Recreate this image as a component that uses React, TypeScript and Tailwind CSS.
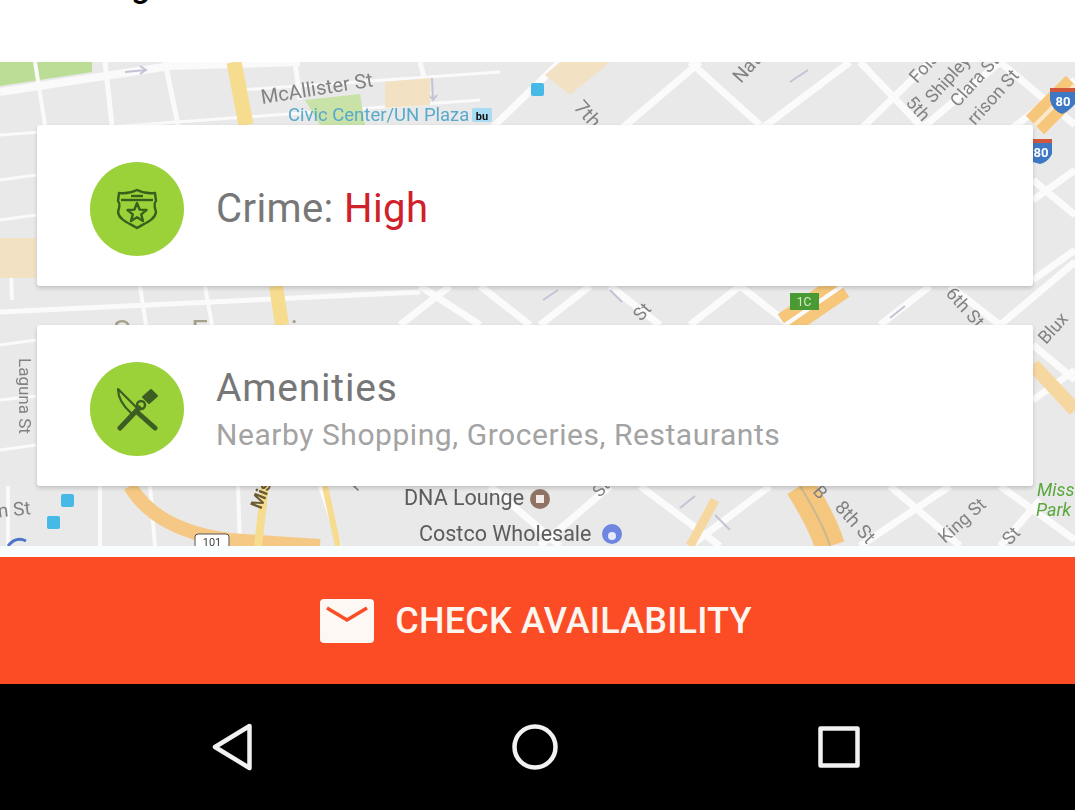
import React from 'react'

const sans = "[font-family:Roboto,'Noto_Sans',sans-serif]"

// Map drawing that sits behind the two cards
const MapBackground = () => (
  <svg className="absolute inset-0 w-full h-full blur-[0.7px]" viewBox="0 62 1075 484" preserveAspectRatio="none">
    <rect x="0" y="62" width="1075" height="484" fill="#e9e9e9" />

    {/* green park, top left */}
    <polygon points="0,62 92,62 92,72 0,86" fill="#bcdd96" />

    {/* straight west side streets */}
    <g stroke="#fafafa" fill="none">
      <path d="M0 92 L170 66 L300 62" strokeWidth="8" />
      <path d="M0 135 L480 100 M240 90 L500 72" strokeWidth="3" />
      <path d="M0 180 L36 175 M0 220 L36 215 M0 255 L36 250 M0 345 L36 340" strokeWidth="3" />
      <path d="M0 312 L420 292" strokeWidth="5" />
      <path d="M105 62 L112 125 M165 62 L178 125 M295 62 L300 100 M420 62 L430 100" strokeWidth="5" />
      <path d="M35 62 L45 125 M10 240 L12 300 M140 286 L146 325 M205 286 L212 325" strokeWidth="4" />
      <path d="M8 486 L8 546 M100 486 L100 546 M150 486 L155 546 M238 486 L240 546 M320 486 L340 546" strokeWidth="4" />
      <path d="M0 400 L36 396 M0 450 L36 445" strokeWidth="3" />
    </g>

    {/* diagonal SoMa grid */}
    <g stroke="#fbfbfb" fill="none" strokeWidth="7">
      <path d="M490 130 L560 62 M620 130 L700 62 M760 130 L850 62 M860 130 L930 62 M920 130 L1000 62 M1010 130 L1075 80" />
      <path d="M690 62 L760 125 M860 62 L920 125 M1000 62 L1075 125" />
      <path d="M400 325 L450 286 M540 325 L590 286 M690 325 L740 286 M880 325 L930 286 M1033 200 L1075 170 M1033 280 L1075 250 M1000 325 L1075 262" />
      <path d="M420 286 L480 325 M480 286 L530 325 M610 286 L660 325 M740 286 L790 325 M950 286 L1000 325 M1033 180 L1075 215 M1033 345 L1075 380" />
      <path d="M540 546 L610 486 M690 546 L770 486 M860 546 L950 486 M1000 546 L1040 500" />
      <path d="M490 486 L560 546 M640 486 L720 546 M890 486 L960 546 M1000 486 L1075 540" />
      <path d="M1033 400 L1075 370" />
    </g>

    {/* one-way arrows */}
    <g stroke="#c3c3d6" fill="none" strokeWidth="2">
      <path d="M125 72 L146 70 M140 66 L146 70 L140 74" />
      <path d="M432 78 L433 100 M429 95 L433 100 L437 95" />
      <path d="M790 82 L808 70" />
      <path d="M543 300 L558 290" />
      <path d="M610 290 L622 302" />
      <path d="M890 318 L905 306" />
      <path d="M680 508 L695 496" />
      <path d="M715 515 L730 530" />
    </g>

    {/* beige blocks */}
    <g fill="#f3e1c4">
      <polygon points="560,62 610,62 570,95 545,75" />
      <polygon points="0,238 36,238 36,278 0,278" />
      <polygon points="385,82 430,78 430,105 385,108" />
    </g>
    <polygon points="305,100 360,94 365,125 320,125" fill="#c8e2a8" />

    {/* highways */}
    <g fill="none">
      <path d="M234 62 L246 125" stroke="#f6dc8e" strokeWidth="15" />
      <path d="M276 286 L282 325" stroke="#f6dc8e" strokeWidth="14" />
      <path d="M130 486 C150 520 190 535 230 540 L320 546" stroke="#f5c985" strokeWidth="14" />
      <path d="M785 325 L842 286" stroke="#f6c77a" strokeWidth="26" />
      <path d="M785 325 L842 286" stroke="#fbfbfb" strokeWidth="4" />
      <path d="M1035 125 L1075 85" stroke="#f6c77a" strokeWidth="26" />
      <path d="M1035 125 L1075 85" stroke="#fbe8c8" strokeWidth="4" />
      <path d="M1033 365 L1075 410" stroke="#f6d7a0" strokeWidth="14" />
      <path d="M800 486 C815 510 825 530 830 546" stroke="#f5c77e" strokeWidth="30" />
      <path d="M800 486 C815 510 825 530 830 546" stroke="#c9b98f" strokeWidth="2" />
      <path d="M265 486 L258 546" stroke="#f6dc8e" strokeWidth="8" />
      <path d="M325 486 L338 546" stroke="#f6dc8e" strokeWidth="6" />
      <path d="M690 546 L715 500" stroke="#f6d7a0" strokeWidth="9" />
    </g>

    {/* freeway and exit shields */}
    <rect x="790" y="293" width="29" height="17" fill="#4a9a34" />
    <text x="804" y="306" textAnchor="middle" fontSize="12" fill="#d7ebc8" fontFamily="Roboto, sans-serif">1C</text>
    <path d="M1050 91 H1075 V104 Q1068 112 1062 114 Q1052 110 1050 100 Z" fill="#3d78c4" />
    <rect x="1050" y="88" width="25" height="4" fill="#d0563c" />
    <text x="1063" y="106" textAnchor="middle" fontSize="13" fontWeight="700" fill="#ffffff" fontFamily="Roboto, sans-serif">80</text>
    <path d="M1033 143 H1052 V154 Q1048 162 1040 164 L1033 162 Z" fill="#3d78c4" />
    <rect x="1033" y="139" width="19" height="4" fill="#d0563c" />
    <text x="1041" y="157" textAnchor="middle" fontSize="13" fontWeight="700" fill="#ffffff" fontFamily="Roboto, sans-serif">80</text>
    <rect x="195" y="534" width="34" height="14" rx="3" fill="#ffffff" stroke="#555555" />
    <text x="212" y="546" textAnchor="middle" fontSize="11" fill="#444444" fontFamily="Roboto, sans-serif">101</text>

    {/* transit markers */}
    <rect x="531" y="83" width="13" height="13" rx="2" fill="#47b9e6" />
    <rect x="61" y="494" width="13" height="13" rx="2" fill="#47b9e6" />
    <rect x="47" y="516" width="13" height="13" rx="2" fill="#47b9e6" />
    <path d="M8 546 Q16 536 26 541" fill="none" stroke="#4c74c8" strokeWidth="3" />
    <rect x="472" y="108" width="20" height="14" rx="2" fill="#a9dcf2" />
    <text x="482" y="120" textAnchor="middle" fontSize="11" fontWeight="700" fill="#111111" fontFamily="Roboto, sans-serif">bu</text>

    {/* POI dots */}
    <circle cx="540" cy="499" r="10" fill="#8f7464" />
    <rect x="536" y="495" width="8" height="8" fill="#f3ece6" />
    <circle cx="612" cy="534" r="10" fill="#6f86e0" />
    <circle cx="612" cy="536" r="4" fill="#e6ebfb" />

    {/* street labels */}
    <g fontFamily="Roboto, sans-serif" fill="#828282" fontSize="20">
      <text x="262" y="104" transform="rotate(-9 262 104)">McAllister St</text>
      <text x="573" y="108" transform="rotate(48 573 108)">7th</text>
      <text x="741" y="84" fontSize="19" transform="rotate(-48 741 84)">Natc</text>
      <text x="917" y="84" fontSize="18" transform="rotate(-48 917 84)">Fols</text>
      <text x="933" y="104" fontSize="18" transform="rotate(-48 933 104)">Shipley</text>
      <text x="958" y="108" fontSize="18" transform="rotate(-48 958 108)">Clara St</text>
      <text x="975" y="126" fontSize="18" transform="rotate(-48 975 126)">rrison St</text>
      <text x="905" y="103" fontSize="18" transform="rotate(48 905 103)">5th</text>
      <text x="641" y="322" fontSize="18" transform="rotate(-48 641 322)">St</text>
      <text x="945" y="294" fontSize="18" transform="rotate(48 945 294)">6th St</text>
      <text x="1046" y="345" fontSize="18" transform="rotate(-48 1046 345)">Blux</text>
      <text x="29" y="358" fontSize="17" transform="rotate(90 29 358) translate(0 10)">Laguna St</text>
      <text x="-6" y="518" fontSize="19" transform="rotate(-6 -6 518)">in St</text>
      <text x="261" y="510" fontSize="17" fontWeight="700" fill="#6b5a34" transform="rotate(-68 261 510)">Mis</text>
      <text x="600" y="498" fontSize="17" transform="rotate(-48 600 498)">St</text>
      <text x="357" y="492" fontSize="17" transform="rotate(-48 357 492)">K</text>
      <text x="812" y="492" fontSize="18" transform="rotate(48 812 492)">B</text>
      <text x="834" y="508" fontSize="19" transform="rotate(48 834 508)">8th St</text>
      <text x="945" y="544" fontSize="18" transform="rotate(-42 945 544)">King St</text>
      <text x="1010" y="546" fontSize="18" transform="rotate(-48 1010 546)">St</text>
      <text x="404" y="505" fontSize="21.5" fill="#5c5c5c">DNA Lounge</text>
      <text x="419" y="541" fontSize="21.5" fill="#5c5c5c">Costco Wholesale</text>
      <text x="1037" y="496" fontSize="18" fontStyle="italic" fill="#5aa83c">Miss</text>
      <text x="1036" y="516" fontSize="18" fontStyle="italic" fill="#5aa83c">Park</text>
      <text x="288" y="121" fontSize="18.5" fill="#58aacb">Civic Center/UN Plaza</text>
      <text x="113" y="341" fontSize="30" letterSpacing="5" fill="#a69f8c">San Francisco</text>
    </g>
  </svg>
)

const BadgeIcon = () => (
  <svg viewBox="0 0 44 44" className="w-[44px] h-[44px]" fill="none" stroke="#38601c" strokeWidth="2.4" strokeLinejoin="round">
    <path d="M4 6 C12 7 16 6 22 3 C28 6 32 7 40 6 L41 14 C38 17 40 21 41 25 C40 33 30 36 22 41 C14 36 4 33 3 25 C4 21 6 17 3 14 Z" />
    <path d="M6 13 H38" />
    <path d="M16 9 H28" />
    <path d="M22 16 L24.6 22.6 L31.5 23 L26.2 27.4 L28 34 L22 30.3 L16 34 L17.8 27.4 L12.5 23 L19.4 22.6 Z" />
  </svg>
)

const UtensilsIcon = () => (
  <svg viewBox="0 0 44 44" className="w-[44px] h-[44px]" fill="none" stroke="#3c5e22" strokeLinecap="round" strokeLinejoin="round">
    <path d="M3 2 L24 23 L17 27 C9 20 3 12 3 2 Z" strokeWidth="2.2" />
    <path d="M22 25 L40 41" strokeWidth="5" />
    <path d="M5 41 L24 21" strokeWidth="5" />
    <circle cx="26" cy="18" r="4" strokeWidth="2.5" />
    <path d="M28 10 L36 3 L42 9 L34 16 Z" fill="#3c5e22" strokeWidth="2" />
  </svg>
)

const IconCircle = ({ children }: { children: React.ReactNode }) => (
  <div className="w-[94px] h-[94px] rounded-full bg-[#9bd139] flex items-center justify-center shrink-0">
    {children}
  </div>
)

export default function App() {
  return (
    <div className={`w-[1075px] h-[810px] overflow-hidden bg-white flex flex-col ${sans}`}>
      {/* Heading cut off by the top of the screen */}
      <div className="h-[62px] shrink-0 relative overflow-hidden">
        <p className="absolute left-[80px] -top-[33px] text-[34px] leading-[36px] font-medium text-black whitespace-nowrap">
          Neighborhood Details
        </p>
      </div>

      {/* Map with cards */}
      <div className="relative h-[484px] shrink-0 overflow-hidden pl-[37px] pr-[42px] pt-[63px] flex flex-col gap-[39px]">
        <MapBackground />
        <div className="relative h-[161px] bg-white rounded-[3px] shadow-[0_2px_4px_rgba(0,0,0,0.18)] flex items-center gap-[32px] pl-[53px] pt-[7px]">
          <IconCircle>
            <BadgeIcon />
          </IconCircle>
          <p className="text-[40px] leading-none tracking-[0.4px] text-[#777777]">
            Crime: <span className="text-[#d0202a]">High</span>
          </p>
        </div>
        <div className="relative h-[161px] bg-white rounded-[3px] shadow-[0_2px_4px_rgba(0,0,0,0.18)] flex items-center gap-[32px] pl-[53px] pt-[7px]">
          <IconCircle>
            <UtensilsIcon />
          </IconCircle>
          <div className="flex flex-col gap-[11px]">
            <p className="text-[39px] leading-[40px] tracking-[0.8px] text-[#777777]">Amenities</p>
            <p className="text-[30px] leading-[32px] tracking-[0.55px] text-[#a3a3a3]">Nearby Shopping, Groceries, Restaurants</p>
          </div>
        </div>
      </div>

      <div className="h-[11px] shrink-0 bg-[#f8fdfd]" />

      {/* Call to action */}
      <div className="h-[127px] shrink-0 bg-[#fb4c25] flex items-center justify-center gap-[21px] pr-[3px]">
        <svg viewBox="0 0 54 44" className="w-[54px] h-[44px]">
          <rect width="54" height="44" rx="4" fill="#fdf8f4" />
          <path d="M7 9 L27 21 L47 9" fill="none" stroke="#fb4c25" strokeWidth="3.5" />
        </svg>
        <span className="text-[36px] leading-none font-medium tracking-[0.2px] text-[#fdf6f0]">CHECK AVAILABILITY</span>
      </div>

      {/* Android nav bar */}
      <div className="flex-1 bg-black flex items-center justify-center gap-[260px] pr-[3px]">
        <svg viewBox="0 0 40 48" className="w-[40px] h-[48px]" fill="none" stroke="#f2f2f2" strokeWidth="4.5" strokeLinejoin="round">
          <path d="M37.5 3 L3 24 L37.5 45 Z" />
        </svg>
        <svg viewBox="0 0 46 46" className="w-[46px] h-[46px]" fill="none" stroke="#f2f2f2" strokeWidth="4.5">
          <circle cx="23" cy="23" r="20.5" />
        </svg>
        <svg viewBox="0 0 42 42" className="w-[42px] h-[42px]" fill="none" stroke="#f2f2f2" strokeWidth="4.5" strokeLinejoin="round">
          <rect x="2.5" y="2.5" width="37" height="37" />
        </svg>
      </div>
    </div>
  )
}
